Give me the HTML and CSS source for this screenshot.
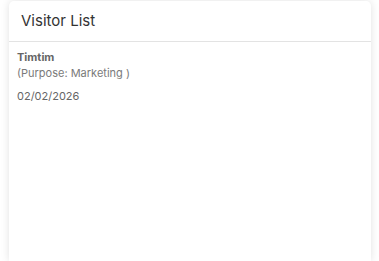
FILE: index.html
```html
<!DOCTYPE html>
<html>
<head>
<meta charset="utf-8">
<link rel="stylesheet" href="styles.css">
</head>
<body>
<div class="card">
  <div class="card-header">Visitor List</div>
  <div class="card-body">
    <div class="visitor">
      <div class="name">Timtim</div>
      <div class="purpose">(Purpose: Marketing )</div>
      <div class="date">02/02/2026</div>
    </div>
  </div>
</div>
</body>
</html>
```
FILE: styles.css
```css
html, body {
  margin: 0;
  padding: 0;
  background: #ffffff;
}
body {
  padding: 1px 8px 0 9px;
  font-family: Inter, "Noto Sans", sans-serif;
  height: 261px;
  overflow: hidden;
  box-sizing: border-box;
}
.card {
  background: #fff;
  border-radius: 5px 5px 0 0;
  box-shadow: 0 0 8px rgba(0,0,0,0.12);
  height: 260px;
  width: 362px;
}
.card-header {
  height: 41px;
  box-sizing: border-box;
  padding: 10px 12px 0 12px;
  font-size: 15px;
  color: #333;
  border-bottom: 1px solid #e3e3e3;
}
.card-body {
  padding: 8px 8px;
}
.name {
  font-size: 11px;
  font-weight: 700;
  color: #666;
  line-height: 15px;
}
.purpose {
  font-size: 11px;
  color: #7a7a7a;
  line-height: 15px;
  margin-top: 1px;
}
.date {
  font-size: 11px;
  color: #666;
  margin-top: 8px;
  line-height: 15px;
}
```
